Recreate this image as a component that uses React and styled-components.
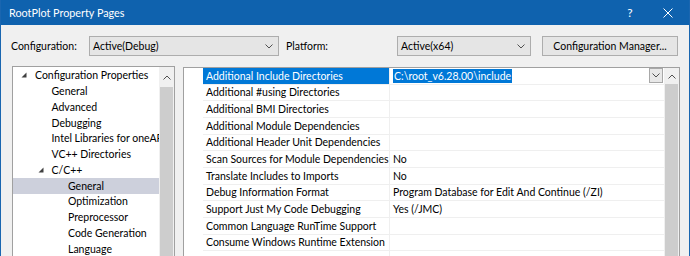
import styled, { createGlobalStyle } from "styled-components";

const Global = createGlobalStyle`
    html, body {
        margin: 0;
        padding: 0;
        background: #f0f0f0;
    }
    body {
        font-family: Lato, "Noto Sans", sans-serif;
    }
`;

const Window = styled.div`
    width: 690px;
    height: 256px;
    box-sizing: border-box;
    border-left: 1px solid #1a66b0;
    border-right: 1px solid #1a66b0;
    background: #f0f0f0;
    overflow: hidden;
    display: flex;
    flex-direction: column;
    font-size: 10.5px;
    color: #000;
`,
TitleBar = styled.div`
    height: 25px;
    flex: none;
    display: flex;
    align-items: center;
    background: #0f62ae;
    color: #fff;
    padding-left: 8px;
    font-size: 10.8px;
`,
TitleText = styled.div`
    flex: 1;
`,
CaptionButton = styled.div`
    width: ${p => p.$w}px;
    height: 25px;
    display: flex;
    align-items: center;
    justify-content: center;
    font-size: 12px;
`,
ConfigRow = styled.div`
    display: flex;
    align-items: center;
    height: 20px;
    margin: 11px 0 0 10px;
    flex: none;
`,
Label = styled.div`
    width: ${p => p.$w}px;
    margin-left: ${p => p.$ml || 0}px;
    flex: none;
    white-space: nowrap;
`,
Combo = styled.div`
    width: ${p => p.$w}px;
    height: 20px;
    box-sizing: border-box;
    border: 1px solid #adadad;
    background: #e5e5e5;
    display: flex;
    align-items: center;
    justify-content: space-between;
    padding: 0 5px 0 3px;
    flex: none;
`,
Button = styled.div`
    width: 136px;
    height: 20px;
    margin-left: 11px;
    box-sizing: border-box;
    border: 1px solid #adadad;
    background: #e5e5e5;
    display: flex;
    align-items: center;
    justify-content: center;
    flex: none;
`,
Main = styled.div`
    display: flex;
    align-items: flex-start;
    gap: 8px;
    margin: 10px 9px 0 11px;
    flex: 1;
    min-height: 0;
`,
Tree = styled.div`
    width: 163px;
    height: 220px;
    box-sizing: border-box;
    border: 1px solid #a0a0a0;
    background: #fff;
    display: flex;
    flex: none;
`,
TreeList = styled.div`
    flex: 1;
    min-width: 0;
    overflow: hidden;
    padding-top: 0.5px;
`,
TreeRow = styled.div`
    height: 15.75px;
    display: flex;
    align-items: center;
    white-space: nowrap;
    padding-left: ${p => p.$indent}px;
    background: ${p => (p.$selected ? "#cdd0dc" : "transparent")};
`,
Expander = styled.span`
    width: 14px;
    flex: none;
    display: flex;
    align-items: center;
`,
Scrollbar = styled.div`
    width: 15px;
    flex: none;
    background: #f0f0f0;
    display: flex;
    flex-direction: column;
`,
ScrollArrow = styled.div`
    height: ${p => p.$h}px;
    flex: none;
    display: flex;
    align-items: center;
    justify-content: center;
`,
ScrollThumb = styled.div`
    flex: 1;
    margin: 0 1px;
    background: #cdcdcd;
`,
Grid = styled.div`
    flex: 1;
    height: 220px;
    margin-top: 1px;
    box-sizing: border-box;
    border: 1px solid #a0a0a0;
    background: #fff;
    display: flex;
`,
GridBody = styled.div`
    flex: 1;
    min-width: 0;
    overflow: hidden;
`,
GridRow = styled.div`
    display: grid;
    grid-template-columns: 19px 187px 1fr;
    height: 16.67px;
`,
NameCell = styled.div`
    box-sizing: border-box;
    border-bottom: 1px solid #efefef;
    border-right: 1px solid #efefef;
    padding-left: 3px;
    display: flex;
    align-items: center;
    overflow: hidden;
    white-space: nowrap;
    background: ${p => (p.$selected ? "#0078d7" : "transparent")};
    color: ${p => (p.$selected ? "#fff" : "#000")};
`,
ValueCell = styled.div`
    box-sizing: border-box;
    border-bottom: 1px solid #efefef;
    padding-left: 3px;
    display: flex;
    align-items: center;
    white-space: nowrap;
    overflow: hidden;
`,
SelectedText = styled.span`
    background: #0078d7;
    color: #fff;
    padding: 0 1px;
    line-height: 14px;
`,
DropButton = styled.div`
    margin-left: auto;
    margin-right: 1px;
    width: 14px;
    height: 15px;
    box-sizing: border-box;
    border: 1px solid #a8a8a8;
    background: #e8e8e8;
    display: flex;
    align-items: center;
    justify-content: center;
    flex: none;
`;

const Chevron = ({ up }) => (
    <svg width="8" height="5" viewBox="0 0 8 5">
        <polyline
            points={up ? "0.5,4.5 4,1 7.5,4.5" : "0.5,0.5 4,4 7.5,0.5"}
            fill="none"
            stroke="#505050"
            strokeWidth="1"
        />
    </svg>
);

const Triangle = () => (
    <svg width="6" height="6" viewBox="0 0 6 6">
        <polygon points="5.5,0.5 5.5,5.5 0.5,5.5" fill="#404040" />
    </svg>
);

const treeItems = [
    { label: "Configuration Properties", level: 0, open: true },
    { label: "General", level: 1 },
    { label: "Advanced", level: 1 },
    { label: "Debugging", level: 1 },
    { label: "Intel Libraries for oneAPI", level: 1 },
    { label: "VC++ Directories", level: 1 },
    { label: "C/C++", level: 1, open: true },
    { label: "General", level: 2, selected: true },
    { label: "Optimization", level: 2 },
    { label: "Preprocessor", level: 2 },
    { label: "Code Generation", level: 2 },
    { label: "Language", level: 2 },
];

// text starts 22px into the tree, 16.5px more per level; the expander takes 14px
const indentFor = item => 22 + item.level * 16.5 - (item.open ? 14 : 0);

const properties = [
    ["Additional Include Directories", "C:\\root_v6.28.00\\include"],
    ["Additional #using Directories", ""],
    ["Additional BMI Directories", ""],
    ["Additional Module Dependencies", ""],
    ["Additional Header Unit Dependencies", ""],
    ["Scan Sources for Module Dependencies", "No"],
    ["Translate Includes to Imports", "No"],
    ["Debug Information Format", "Program Database for Edit And Continue (/ZI)"],
    ["Support Just My Code Debugging", "Yes (/JMC)"],
    ["Common Language RunTime Support", ""],
    ["Consume Windows Runtime Extension", ""],
    ["", ""],
];

const App = () => {
    return (
        <Window>
            <Global />
            <TitleBar>
                <TitleText>RootPlot Property Pages</TitleText>
                <CaptionButton $w={34}>?</CaptionButton>
                <CaptionButton $w={42}>
                    <svg width="10" height="10" viewBox="0 0 10 10">
                        <path d="M0.5,0.5 L9.5,9.5 M9.5,0.5 L0.5,9.5" stroke="#fff" strokeWidth="1" />
                    </svg>
                </CaptionButton>
            </TitleBar>

            <ConfigRow>
                <Label $w={78}>Configuration:</Label>
                <Combo $w={190}>
                    <span>Active(Debug)</span>
                    <Chevron />
                </Combo>
                <Label $w={111} $ml={7}>Platform:</Label>
                <Combo $w={134}>
                    <span>Active(x64)</span>
                    <Chevron />
                </Combo>
                <Button>Configuration Manager...</Button>
            </ConfigRow>

            <Main>
                <Tree>
                    <TreeList>
                        {treeItems.map((item, i) => (
                            <TreeRow key={i} $indent={indentFor(item)} $selected={item.selected}>
                                {item.open && (
                                    <Expander>
                                        <Triangle />
                                    </Expander>
                                )}
                                {item.label}
                            </TreeRow>
                        ))}
                    </TreeList>
                    <Scrollbar>
                        <ScrollArrow $h={20}>
                            <Chevron up />
                        </ScrollArrow>
                        <ScrollThumb />
                    </Scrollbar>
                </Tree>

                <Grid>
                    <GridBody>
                        {properties.map(([name, value], i) => (
                            <GridRow key={i}>
                                <div />
                                <NameCell $selected={i === 0}>{name}</NameCell>
                                <ValueCell>
                                    {i === 0 ? (
                                        <>
                                            <SelectedText>{value}</SelectedText>
                                            <DropButton>
                                                <Chevron />
                                            </DropButton>
                                        </>
                                    ) : (
                                        value
                                    )}
                                </ValueCell>
                            </GridRow>
                        ))}
                    </GridBody>
                    <Scrollbar>
                        <ScrollArrow $h={16}>
                            <Chevron up />
                        </ScrollArrow>
                        <ScrollThumb />
                    </Scrollbar>
                </Grid>
            </Main>
        </Window>
    );
};

export default App;
